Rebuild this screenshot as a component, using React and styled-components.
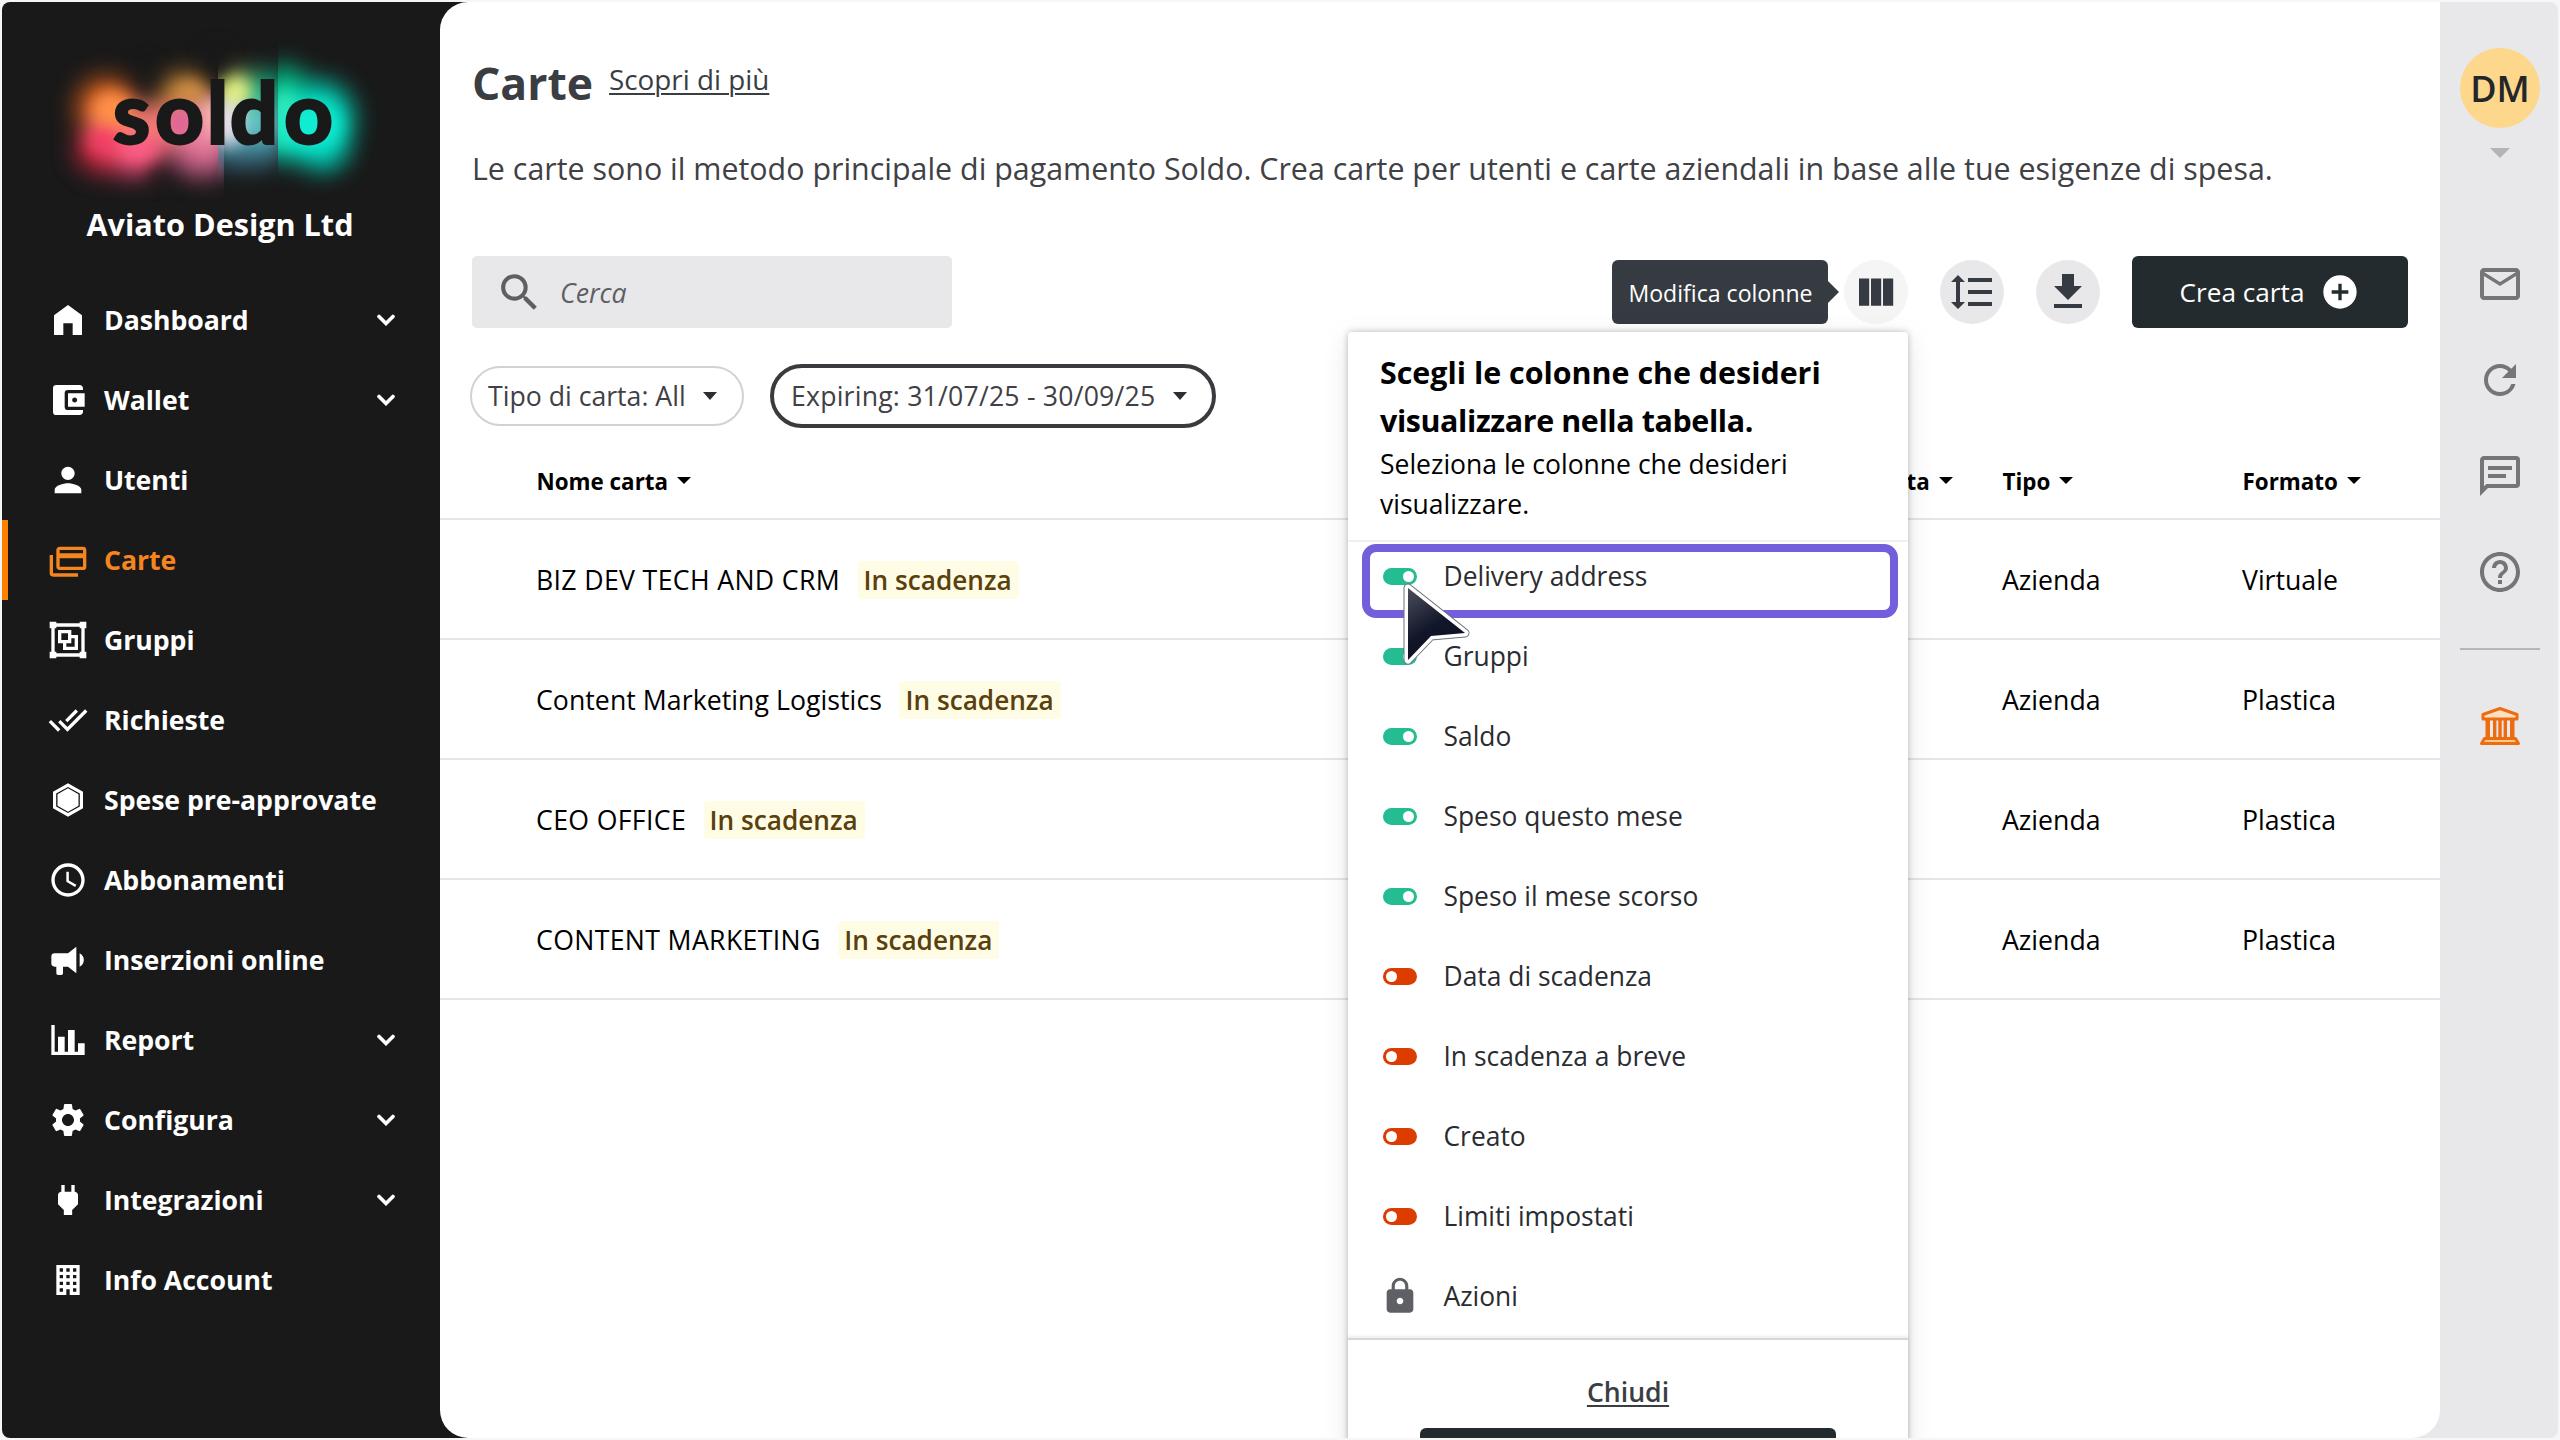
import { useState } from 'react'
import styled, { createGlobalStyle } from 'styled-components'
import {
    MdAccessTime,
    MdAccountBalanceWallet,
    MdAddCircle,
    MdDoneAll,
    MdFormatLineSpacing,
    MdHelpOutline,
    MdLock,
    MdMailOutline,
    MdPerson,
    MdRefresh,
    MdSearch,
    MdSettings,
} from 'react-icons/md'

const paths = {
    home: 'M12 3L3.6 9.2V21H9.2V14H14.8V21H20.4V9.2Z',
    cards: 'M21,8V6H7V8H21M21,16V11H7V16H21M21,4A2,2 0 0,1 23,6V16A2,2 0 0,1 21,18H7C5.89,18 5,17.1 5,16V6C5,4.89 5.89,4 7,4H21M3,20H18V22H3A2,2 0 0,1 1,20V9H3V20Z',
    group: 'M1,1V5H2V19H1V23H5V22H19V23H23V19H22V5H23V1H19V2H5V1ZM5,4H19V5H20V19H19V20H5V19H4V5H5ZM6,6V14H9V18H18V9H14V6ZM8,8H12V12H8ZM14,11H16V16H11V14H14Z',
    hexagon: 'M12 2L21 7V17L12 22L3 17V7ZM12 4.2L4.9 8.1V15.9L12 19.8L19.1 15.9V8.1ZM12 5L18.3 8.5V15.5L12 19L5.7 15.5V8.5Z',
    bullhorn: 'M12,8H4A2,2 0 0,0 2,10V14A2,2 0 0,0 4,16H5V20A1,1 0 0,0 6,21H8A1,1 0 0,0 9,20V16H12L17,20V4L12,8M21.5,12C21.5,13.71 20.54,15.26 19,16V8C20.53,8.75 21.5,10.3 21.5,12Z',
    chart: 'M22,21H2V3H4V19H6V10H10V19H12V6H16V19H18V14H22V21Z',
    plug: 'M16,7V3H14V7H10V3H8V7C7,7 6,8 6,9V14.5L9.5,18V21H14.5V18L18,14.5V9C18,8 17,7 16,7Z',
    building: 'M5,3V21H11V17.5H13V21H19V3H5M7,5H9V7H7V5M11,5H13V7H11V5M15,5H17V7H15V5M7,9H9V11H7V9M11,9H13V11H11V9M15,9H17V11H15V9M7,13H9V15H7V13M11,13H13V15H11V13M15,13H17V15H15V13M7,17H9V19H7V17M15,17H17V19H15V17Z',
    columns: 'M3.5 5.2H8.6V18.9H3.5ZM9.5 5.2H14.6V18.9H9.5ZM15.5 5.2H20.6V18.9H15.5Z',
    download: 'M19 9h-4V3H9v6H5l7 7 7-7zM5 18v2h14v-2H5z',
    message: 'M20,2A2,2 0 0,1 22,4V16A2,2 0 0,1 20,18H6L2,22V4C2,2.89 2.9,2 4,2H20M4,4V17.17L5.17,16H20V4H4M6,7H18V9H6V7M6,11H15V13H6V11Z',
}

function Icon({ name, size = 40 }) {
    return (
        <svg width={size} height={size} viewBox="0 0 24 24" fill="currentColor">
            <path fillRule="evenodd" d={paths[name]} />
        </svg>
    )
}

const menu = [
    { label: 'Dashboard', icon: <Icon name="home" />, open: true },
    { label: 'Wallet', icon: <MdAccountBalanceWallet size={40} />, open: true },
    { label: 'Utenti', icon: <MdPerson size={40} /> },
    { label: 'Carte', icon: <Icon name="cards" />, active: true },
    { label: 'Gruppi', icon: <Icon name="group" /> },
    { label: 'Richieste', icon: <MdDoneAll size={40} /> },
    { label: 'Spese pre-approvate', icon: <Icon name="hexagon" /> },
    { label: 'Abbonamenti', icon: <MdAccessTime size={40} /> },
    { label: 'Inserzioni online', icon: <Icon name="bullhorn" /> },
    { label: 'Report', icon: <Icon name="chart" />, open: true },
    { label: 'Configura', icon: <MdSettings size={40} />, open: true },
    { label: 'Integrazioni', icon: <Icon name="plug" />, open: true },
    { label: 'Info Account', icon: <Icon name="building" /> },
]

const cards = [
    { name: 'BIZ DEV TECH AND CRM', format: 'Virtuale' },
    { name: 'Content Marketing Logistics', format: 'Plastica' },
    { name: 'CEO OFFICE', format: 'Plastica' },
    { name: 'CONTENT MARKETING', format: 'Plastica' },
]

const initialColumns = [
    { label: 'Delivery address', on: true },
    { label: 'Gruppi', on: true },
    { label: 'Saldo', on: true },
    { label: 'Speso questo mese', on: true },
    { label: 'Speso il mese scorso', on: true },
    { label: 'Data di scadenza', on: false },
    { label: 'In scadenza a breve', on: false },
    { label: 'Creato', on: false },
    { label: 'Limiti impostati', on: false },
    { label: 'Azioni', locked: true },
]

function Logo() {
    return (
        <svg width="438" height="200" viewBox="2 2 438 200">
            <defs>
                <filter id="soft" x="-60%" y="-60%" width="220%" height="220%" colorInterpolationFilters="sRGB">
                    <feGaussianBlur stdDeviation="12" />
                </filter>
                <filter id="softer" x="-60%" y="-60%" width="220%" height="220%" colorInterpolationFilters="sRGB">
                    <feGaussianBlur stdDeviation="8" />
                </filter>
                <clipPath id="left"><rect x="40" y="20" width="184" height="182" /></clipPath>
                <clipPath id="middle"><rect x="218" y="20" width="60" height="182" /></clipPath>
                <clipPath id="right"><rect x="278" y="20" width="120" height="182" /></clipPath>
            </defs>
            <g transform="translate(0 5)">
                <g clipPath="url(#left)">
                    <g filter="url(#soft)">
                        <ellipse cx="106" cy="102" rx="30" ry="30" fill="#c8581a" />
                        <ellipse cx="184" cy="92" rx="26" ry="24" fill="#b87c30" />
                        <ellipse cx="104" cy="144" rx="28" ry="24" fill="#cc2840" />
                        <ellipse cx="136" cy="150" rx="26" ry="22" fill="#e84874" />
                        <ellipse cx="202" cy="150" rx="30" ry="22" fill="#cc5e88" />
                        <ellipse cx="148" cy="122" rx="58" ry="22" fill="#fb7c78" />
                        <ellipse cx="210" cy="122" rx="30" ry="26" fill="#f08ca8" />
                    </g>
                    <g filter="url(#softer)">
                        <ellipse cx="112" cy="104" rx="20" ry="18" fill="#ff9048" />
                        <ellipse cx="104" cy="136" rx="16" ry="12" fill="#f53c68" />
                        <ellipse cx="140" cy="144" rx="20" ry="10" fill="#ff5c88" />
                        <ellipse cx="182" cy="118" rx="16" ry="16" fill="#de6496" />
                        <ellipse cx="190" cy="86" rx="16" ry="9" fill="#d89448" />
                        <ellipse cx="214" cy="110" rx="14" ry="18" fill="#f8b4ac" />
                        <ellipse cx="148" cy="70" rx="9" ry="16" fill="#191919" opacity="0.6" />
                        <path d="M160 152L144 186L172 186Z" fill="#191919" opacity="0.6" />
                    </g>
                </g>
                <g clipPath="url(#middle)">
                    <g filter="url(#soft)">
                        <ellipse cx="240" cy="94" rx="26" ry="26" fill="#d0e070" />
                        <ellipse cx="268" cy="90" rx="24" ry="24" fill="#10a87c" />
                        <ellipse cx="246" cy="142" rx="44" ry="20" fill="#39748a" />
                        <ellipse cx="254" cy="118" rx="34" ry="20" fill="#64c4c8" />
                    </g>
                    <g filter="url(#softer)">
                        <ellipse cx="228" cy="118" rx="14" ry="24" fill="#eee2ec" />
                        <ellipse cx="236" cy="86" rx="13" ry="12" fill="#eef484" />
                    </g>
                </g>
                <g clipPath="url(#right)">
                    <g filter="url(#soft)">
                        <ellipse cx="284" cy="88" rx="24" ry="28" fill="#04bc88" />
                        <ellipse cx="320" cy="114" rx="34" ry="38" fill="#02ccb2" />
                        <ellipse cx="286" cy="130" rx="36" ry="26" fill="#0cd4b0" />
                        <ellipse cx="322" cy="138" rx="28" ry="28" fill="#02d0b8" />
                    </g>
                    <g filter="url(#softer)">
                        <ellipse cx="284" cy="112" rx="14" ry="28" fill="#34ecba" />
                        <ellipse cx="312" cy="120" rx="30" ry="24" fill="#10ecd2" />
                    </g>
                </g>
                <g filter="url(#softer)">
                    <path d="M202 42L217 76L230 42Z" fill="#191919" />
                </g>
            </g>
            <LogoText x="131.5 179.5 217.5 254 308.5" y="144">soldo</LogoText>
        </svg>
    )
}

function BankIcon() {
    return (
        <svg width="48" height="48" viewBox="0 0 48 48" fill="#ee6c10" stroke="#ee6c10" strokeWidth="3" strokeLinejoin="round">
            <path d="M7 12.5L24 6.5L41 12.5V17H7Z" fill="#ffe0c0" />
            <path d="M9.5 18H14V36H9.5ZM34 18H38.5V36H34Z" stroke="none" />
            <path d="M17 18H20.4V36H17ZM22.3 18H25.7V36H22.3ZM27.6 18H31V36H27.6Z" stroke="none" />
            <path d="M8.5 36.5H39.5L42.5 41.5H5.5Z" fill="#ffc98c" />
        </svg>
    )
}

function Pointer() {
    return (
        <PointerSvg width="72" height="96" viewBox="0 0 72 96">
            <defs>
                <linearGradient id="ink" x1="0" y1="0" x2="0.5" y2="1">
                    <stop offset="0" stopColor="#4b4f5c" />
                    <stop offset="0.6" stopColor="#12162a" />
                    <stop offset="1" stopColor="#0c1020" />
                </linearGradient>
            </defs>
            <path d="M9 9L66 54L32 57L9 81Z" fill="#6e7078" stroke="#6e7078" strokeWidth="9" strokeLinejoin="round" />
            <path d="M9 9L66 54L32 57L9 81Z" fill="#fff" stroke="#fff" strokeWidth="7" strokeLinejoin="round" />
            <path d="M9 9L66 54L32 57L9 81Z" fill="url(#ink)" />
        </PointerSvg>
    )
}

function ColumnMenu() {
    const [columns, setColumns] = useState(initialColumns)

    function handleToggle(label) {
        setColumns(columns.map((c) => (c.label === label && !c.locked ? { ...c, on: !c.on } : c)))
    }

    return (
        <Menu>
            <MenuHeader>
                <MenuTitle>Scegli le colonne che desideri</MenuTitle>
                <MenuTitle $tight>visualizzare nella tabella.</MenuTitle>
                <p>Seleziona le colonne che desideri visualizzare.</p>
            </MenuHeader>
            {columns.map((column) => (
                <MenuRow key={column.label} onClick={() => handleToggle(column.label)}>
                    <MenuSlot>
                        {column.locked ? <MdLock size={40} /> : <Toggle $on={column.on} />}
                    </MenuSlot>
                    {column.label}
                </MenuRow>
            ))}
            <MenuFooter>
                <CloseLink>Chiudi</CloseLink>
                <ApplyButton />
            </MenuFooter>
            <Highlight />
            <Pointer />
        </Menu>
    )
}

export default function App() {
    return (
        <>
            <GlobalStyle />
            <Frame>
                <Sidebar>
                    <Logo />
                    <Company>Aviato Design Ltd</Company>
                    <nav>
                        {menu.map((item) => (
                            <NavItem key={item.label} $active={item.active}>
                                {item.icon}
                                <span>{item.label}</span>
                                {item.open && (
                                    <svg width="18" height="12" viewBox="0 0 18 12" fill="none" stroke="currentColor" strokeWidth="3.6" strokeLinecap="round">
                                        <path d="M2 2.5L9 9.5L16 2.5" />
                                    </svg>
                                )}
                            </NavItem>
                        ))}
                    </nav>
                </Sidebar>

                <Main>
                    <TitleRow>
                        <h1>Carte</h1>
                        <LearnMore>Scopri di più</LearnMore>
                    </TitleRow>
                    <Description>
                        Le carte sono il metodo principale di pagamento Soldo. Crea carte per utenti e carte aziendali in base alle tue esigenze di spesa.
                    </Description>

                    <Toolbar>
                        <SearchBox>
                            <MdSearch size={49} />
                            <span>Cerca</span>
                        </SearchBox>
                        <Actions>
                            <RoundButton $light>
                                <Icon name="columns" size={48} />
                                <Tooltip>Modifica colonne</Tooltip>
                                <ColumnMenu />
                            </RoundButton>
                            <RoundButton><MdFormatLineSpacing size={48} /></RoundButton>
                            <RoundButton><Icon name="download" size={48} /></RoundButton>
                            <CreateButton>
                                Crea carta
                                <MdAddCircle size={40} />
                            </CreateButton>
                        </Actions>
                    </Toolbar>

                    <Filters>
                        <Chip>Tipo di carta: All<Caret /></Chip>
                        <Chip $selected>Expiring: 31/07/25 - 30/09/25<Caret /></Chip>
                    </Filters>

                    <TableHead>
                        <HeadCell>Nome carta<Caret /></HeadCell>
                        <HeadCell>ta<Caret /></HeadCell>
                        <HeadCell>Tipo<Caret /></HeadCell>
                        <HeadCell>Formato<Caret /></HeadCell>
                    </TableHead>
                    {cards.map((card) => (
                        <TableRow key={card.name}>
                            <NameCell>
                                <CardName $caps={card.name === card.name.toUpperCase()}>{card.name}</CardName>
                                <Badge>In scadenza</Badge>
                            </NameCell>
                            <span>Azienda</span>
                            <span>{card.format}</span>
                        </TableRow>
                    ))}
                </Main>

                <Rail>
                    <Avatar>DM</Avatar>
                    <RailCaret />
                    <RailIcons>
                        <MdMailOutline size={48} />
                        <MdRefresh size={48} />
                        <Icon name="message" size={48} />
                        <MdHelpOutline size={48} />
                    </RailIcons>
                    <RailDivider />
                    <BankIcon />
                </Rail>
            </Frame>
        </>
    )
}

const GlobalStyle = createGlobalStyle`
    * {
        box-sizing: border-box;
    }
    body {
        margin: 0;
        background-color: #f6f6f7;
        font-family: 'Open Sans', 'Noto Sans', sans-serif;
        font-size: 26.67px;
        color: #000;
        overflow: hidden;
    }
    h1, h2, p {
        margin: 0;
    }
    svg {
        flex: none;
        display: block;
    }
`

const Frame = styled.div`
    display: flex;
    width: 2556px;
    height: 1436px;
    margin: 2px;
    border-radius: 8px;
    overflow: hidden;
    background: linear-gradient(90deg, #191919 50%, #e8e8ea 50%);
`

const Sidebar = styled.aside`
    flex: none;
    width: 438px;
    color: #fff;
`

const LogoText = styled.text`
    font-family: 'Lato', sans-serif;
    font-weight: 900;
    font-size: 85px;
    fill: #191919;
    stroke: #191919;
    stroke-width: 2px;
    text-anchor: middle;
`

const Company = styled.div`
    height: 44px;
    line-height: 44px;
    margin-bottom: 34px;
    padding-right: 2px;
    text-align: center;
    font-size: 30.6px;
    font-weight: 700;
`

const NavItem = styled.div`
    display: flex;
    align-items: center;
    gap: 16px;
    height: 80px;
    padding: 0 45px 0 46px;
    font-weight: 700;
    color: ${(props) => (props.$active ? '#f5851f' : '#fff')};
    background: ${(props) =>
        props.$active ? 'linear-gradient(#ff7f00, #ff7f00) -6px 0 / 12px 80px no-repeat' : 'none'};
    span {
        flex: 1;
        padding-bottom: 2px;
        letter-spacing: -0.05px;
        white-space: nowrap;
    }
`

const Main = styled.main`
    flex: none;
    width: 2000px;
    padding-top: 50px;
    background-color: #fff;
    border-radius: 28px 0 28px 28px;
`

const TitleRow = styled.div`
    display: flex;
    align-items: center;
    gap: 16px;
    height: 60px;
    padding: 1px 0 0 32px;
    color: #3a3d42;
    h1 {
        font-size: 44.5px;
        font-weight: 700;
        line-height: 60px;
    }
`

const LearnMore = styled.a`
    padding-bottom: 7px;
    font-size: 27.8px;
    font-weight: 500;
    text-decoration: underline;
    text-decoration-thickness: 2px;
    text-underline-offset: 3px;
`

const Description = styled.p`
    height: 40px;
    margin-top: 36px;
    padding-left: 32px;
    font-size: 30.4px;
    line-height: 42px;
    white-space: nowrap;
    color: #3f4145;
`

const Toolbar = styled.div`
    position: relative;
    z-index: 1;
    display: flex;
    justify-content: space-between;
    height: 72px;
    margin-top: 68px;
    padding: 0 32px;
`

const SearchBox = styled.div`
    display: flex;
    align-items: center;
    gap: 16px;
    width: 480px;
    padding-left: 23px;
    border-radius: 5px;
    background-color: #e8e8ea;
    color: #5d5f63;
    font-style: italic;
`

const Actions = styled.div`
    display: flex;
    align-items: center;
    gap: 32px;
`

const RoundButton = styled.div`
    position: relative;
    display: flex;
    align-items: center;
    justify-content: center;
    width: 64px;
    height: 64px;
    border-radius: 50%;
    background-color: ${(props) => (props.$light ? '#f5f5f6' : '#e8e8ea')};
    color: #363a43;
`

const Tooltip = styled.div`
    position: absolute;
    top: 0;
    right: 80px;
    width: 216px;
    height: 64px;
    line-height: 66px;
    padding-left: 1px;
    border-radius: 6px;
    background-color: #363b41;
    color: #fff;
    text-align: center;
    font-size: 23.1px;
    white-space: nowrap;
    &::after {
        content: '';
        position: absolute;
        left: 100%;
        top: 21px;
        border: 11px solid transparent;
        border-right: 0;
        border-left-color: #363b41;
    }
`

const CreateButton = styled.div`
    display: flex;
    align-items: center;
    justify-content: center;
    gap: 16px;
    width: 276px;
    height: 72px;
    border-radius: 6px;
    background-color: #242b2f;
    color: #fff;
    font-size: 26.2px;
    font-weight: 500;
`

const Filters = styled.div`
    display: flex;
    align-items: center;
    gap: 26px;
    height: 64px;
    margin-top: 36px;
    padding-left: 30px;
`

const Caret = styled.i`
    border: 7px solid transparent;
    border-top: 8px solid currentColor;
    border-bottom: 0;
`

const Chip = styled.div`
    display: flex;
    align-items: center;
    justify-content: space-between;
    width: ${(props) => (props.$selected ? '446px' : '274px')};
    height: ${(props) => (props.$selected ? '64px' : '60px')};
    padding: ${(props) => (props.$selected ? '0 25px 1px 17px' : '0 25px 1px 16px')};
    border: ${(props) => (props.$selected ? '4px solid #3a3b3f' : '2px solid #d2d2d4')};
    border-radius: 32px;
    letter-spacing: ${(props) => (props.$selected ? '0.2px' : '0')};
    color: #3f4145;
    i {
        color: #2c2e33;
    }
`

const TableHead = styled.div`
    display: grid;
    grid-template-columns: 1370px 96px 240px 1fr;
    align-items: center;
    height: 92px;
    padding: 17px 0 0 96.5px;
    border-bottom: 2px solid #e6e6e8;
`

const HeadCell = styled.div`
    display: flex;
    align-items: center;
    gap: 9px;
    font-size: 22.4px;
    font-weight: 700;
    i {
        margin-bottom: 2px;
        border-top-width: 7px;
    }
`

const TableRow = styled.div`
    display: grid;
    grid-template-columns: 1466px 240px 1fr;
    align-items: center;
    height: 120px;
    padding: 1px 0 0 96px;
    border-bottom: 2px solid #e6e6e8;
`

const NameCell = styled.div`
    display: flex;
    align-items: center;
    gap: 17.5px;
`

const CardName = styled.span`
    letter-spacing: ${(props) => (props.$caps ? '0.35px' : '0.05px')};
`

const Badge = styled.span`
    height: 38px;
    line-height: 38px;
    padding: 0 7px 0 6px;
    border-radius: 4px;
    background-color: #fffce6;
    color: #5a400c;
    font-size: 26.2px;
    font-weight: 600;
`

const Menu = styled.div`
    position: absolute;
    top: 72px;
    right: 0;
    width: 560px;
    height: 1200px;
    border-radius: 4px;
    background-color: #fff;
    box-shadow: 0 0 6px rgba(0, 0, 0, 0.25), 0 6px 28px rgba(0, 0, 0, 0.1);
    color: #2a2c30;
`

const MenuHeader = styled.div`
    height: 210px;
    margin-bottom: -6px;
    padding: 17px 32px 0;
    border-bottom: 2px solid #efeff0;
    color: #000;
    p {
        margin-top: -1px;
        font-size: 26.5px;
        line-height: 40px;
    }
`

const MenuTitle = styled.h2`
    font-size: 30.4px;
    font-weight: 700;
    line-height: 48px;
    letter-spacing: ${(props) => (props.$tight ? '-0.38px' : '0')};
`

const MenuRow = styled.div`
    display: flex;
    align-items: center;
    gap: 23.5px;
    height: 80px;
    padding-left: 32px;
    font-size: 26.4px;
`

const MenuSlot = styled.div`
    display: flex;
    justify-content: center;
    width: 40px;
    color: #5f6066;
`

const Toggle = styled.div`
    display: flex;
    align-items: center;
    justify-content: ${(props) => (props.$on ? 'flex-end' : 'flex-start')};
    width: 34px;
    height: 17px;
    padding: 0 3px;
    border-radius: 9px;
    background-color: ${(props) => (props.$on ? '#24bd91' : '#dd3c00')};
    &::after {
        content: '';
        width: 11px;
        height: 11px;
        border-radius: 50%;
        background-color: #fff;
    }
`

const MenuFooter = styled.div`
    display: flex;
    flex-direction: column;
    align-items: center;
    margin-top: 2px;
    padding-top: 32px;
    border-top: 2px solid #d8d8da;
    box-shadow: 0 -2px 3px rgba(0, 0, 0, 0.08);
`

const CloseLink = styled.a`
    height: 40px;
    line-height: 40px;
    color: #3a3d42;
    font-weight: 600;
    text-decoration: underline;
    text-decoration-thickness: 2px;
    text-underline-offset: 3px;
`

const ApplyButton = styled.div`
    width: 416px;
    height: 72px;
    margin-top: 16px;
    border-radius: 6px;
    background-color: #242b2f;
`

const Highlight = styled.div`
    position: absolute;
    top: 212px;
    left: 14px;
    width: 536px;
    height: 74px;
    border: 8px solid #735fdb;
    border-radius: 14px;
`

const PointerSvg = styled.svg`
    position: absolute;
    top: 247px;
    left: 51px;
`

const Rail = styled.aside`
    flex: 1;
    display: flex;
    flex-direction: column;
    align-items: center;
    padding-top: 46px;
    padding-left: 2px;
`

const Avatar = styled.div`
    width: 80px;
    height: 80px;
    line-height: 82px;
    border-radius: 50%;
    background-color: #fdd78b;
    color: #24272a;
    text-align: center;
    font-size: 36px;
    font-weight: 600;
`

const RailCaret = styled.i`
    margin-top: 20px;
    border: 10px solid transparent;
    border-top-color: #b4b4b6;
    border-bottom: 0;
`

const RailIcons = styled.div`
    display: flex;
    flex-direction: column;
    gap: 48px;
    margin-top: 102px;
    color: #737578;
`

const RailDivider = styled.div`
    width: 80px;
    height: 2px;
    margin: 52px 0;
    background-color: #b6b6b8;
`
